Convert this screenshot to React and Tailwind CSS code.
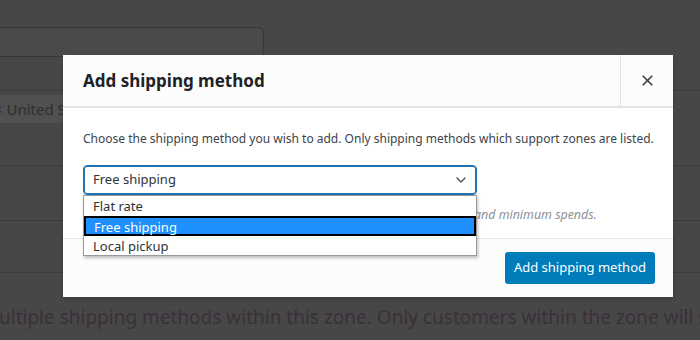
import React from "react";
import { X, ChevronDown } from "lucide-react";

const font = { fontFamily: '"Noto Sans", "Open Sans", sans-serif' };

function Backdrop() {
  return (
    <div className="flex flex-col h-full">
      <div className="h-[27px]" />
      <div className="h-[30px] w-[272px] -ml-2 rounded-r-[5px] border border-[#363636] bg-[#4a4a4a]" />
      <div className="h-[34px] border-b border-[#3b3b3b]" />
      <div className="mt-[4px] h-[28px] w-[120px] bg-[#505050] flex items-center text-[15px] text-[#2e2e2e] -ml-[6px] whitespace-nowrap">
        × United States
      </div>
      <div className="h-[43px] border-b border-[#3b3b3b]" />
      <div className="h-[55px] border-b border-[#3b3b3b]" />
      <div className="h-[52px] border-b border-[#3b3b3b]" />
      <div className="pt-[35px] text-[19px] leading-none text-[#3a303a] whitespace-nowrap -ml-[1px]">
        ultiple shipping methods within this zone. Only customers within the zone will see them.
      </div>
    </div>
  );
}

export default function App() {
  return (
    <div className="relative w-[700px] h-[340px] overflow-hidden bg-[#474747]" style={font}>
      <Backdrop />

      <div className="absolute left-[63px] top-[55px] w-[610px] h-[242px] bg-white flex flex-col shadow-md">
        <div className="h-[53px] shrink-0 flex bg-[#fcfcfc] border-b-[2px] border-[#e5e5e5]">
          <h2 className="flex-1 flex items-center pl-[20px] text-[17px] font-bold text-[#1d2327]">Add shipping method</h2>
          <button className="w-[53px] flex items-center justify-center border-l border-[#e2e2e2] text-[#3c434a]">
            <X size={17} strokeWidth={2.4} />
          </button>
        </div>

        <div className="relative flex-1 px-[20px] pt-[21px]">
          <p className="text-[12px] text-[#3c434a] leading-[20px] whitespace-nowrap">
            Choose the shipping method you wish to add. Only shipping methods which support zones are listed.
          </p>
          <div className="relative mt-[16px] w-[394px] h-[30px] rounded-[4px] border border-[#2271b1] shadow-[0_0_0_1px_#2271b1_inset] flex items-center pl-[9px] pr-[7px] text-[13px] text-[#2c3338]">
            <span className="flex-1">Free shipping</span>
            <ChevronDown size={16} strokeWidth={2.2} className="text-[#50575e]" />
          </div>
          <p className="mt-[10px] text-[12.4px] italic text-[#8c8f94] leading-[20px] whitespace-nowrap">
            Free shipping is a special method which can be triggered with coupons and minimum spends.
          </p>

          <div className="absolute left-[20px] top-[87px] w-[394px] bg-white border border-[#9a9a9a] shadow-[1px_2px_3px_rgba(0,0,0,0.25)] text-[13px] text-[#2c3338] leading-[18px]">
            <div className="h-[20px] pl-[9px] pt-[1px]">Flat rate</div>
            <div className="h-[20px] pl-[8px] bg-[#1e90ff] border-2 border-black text-white">Free shipping</div>
            <div className="h-[19px] pl-[9px] pt-[1px]">Local pickup</div>
          </div>
        </div>

        <div className="h-[59px] shrink-0 bg-[#fcfcfc] border-t border-[#e5e5e5] flex items-center justify-end pr-[18px]">
          <button className="h-[32px] px-[9px] rounded-[3px] bg-[#007cba] text-white text-[13px]">Add shipping method</button>
        </div>
      </div>
    </div>
  );
}
